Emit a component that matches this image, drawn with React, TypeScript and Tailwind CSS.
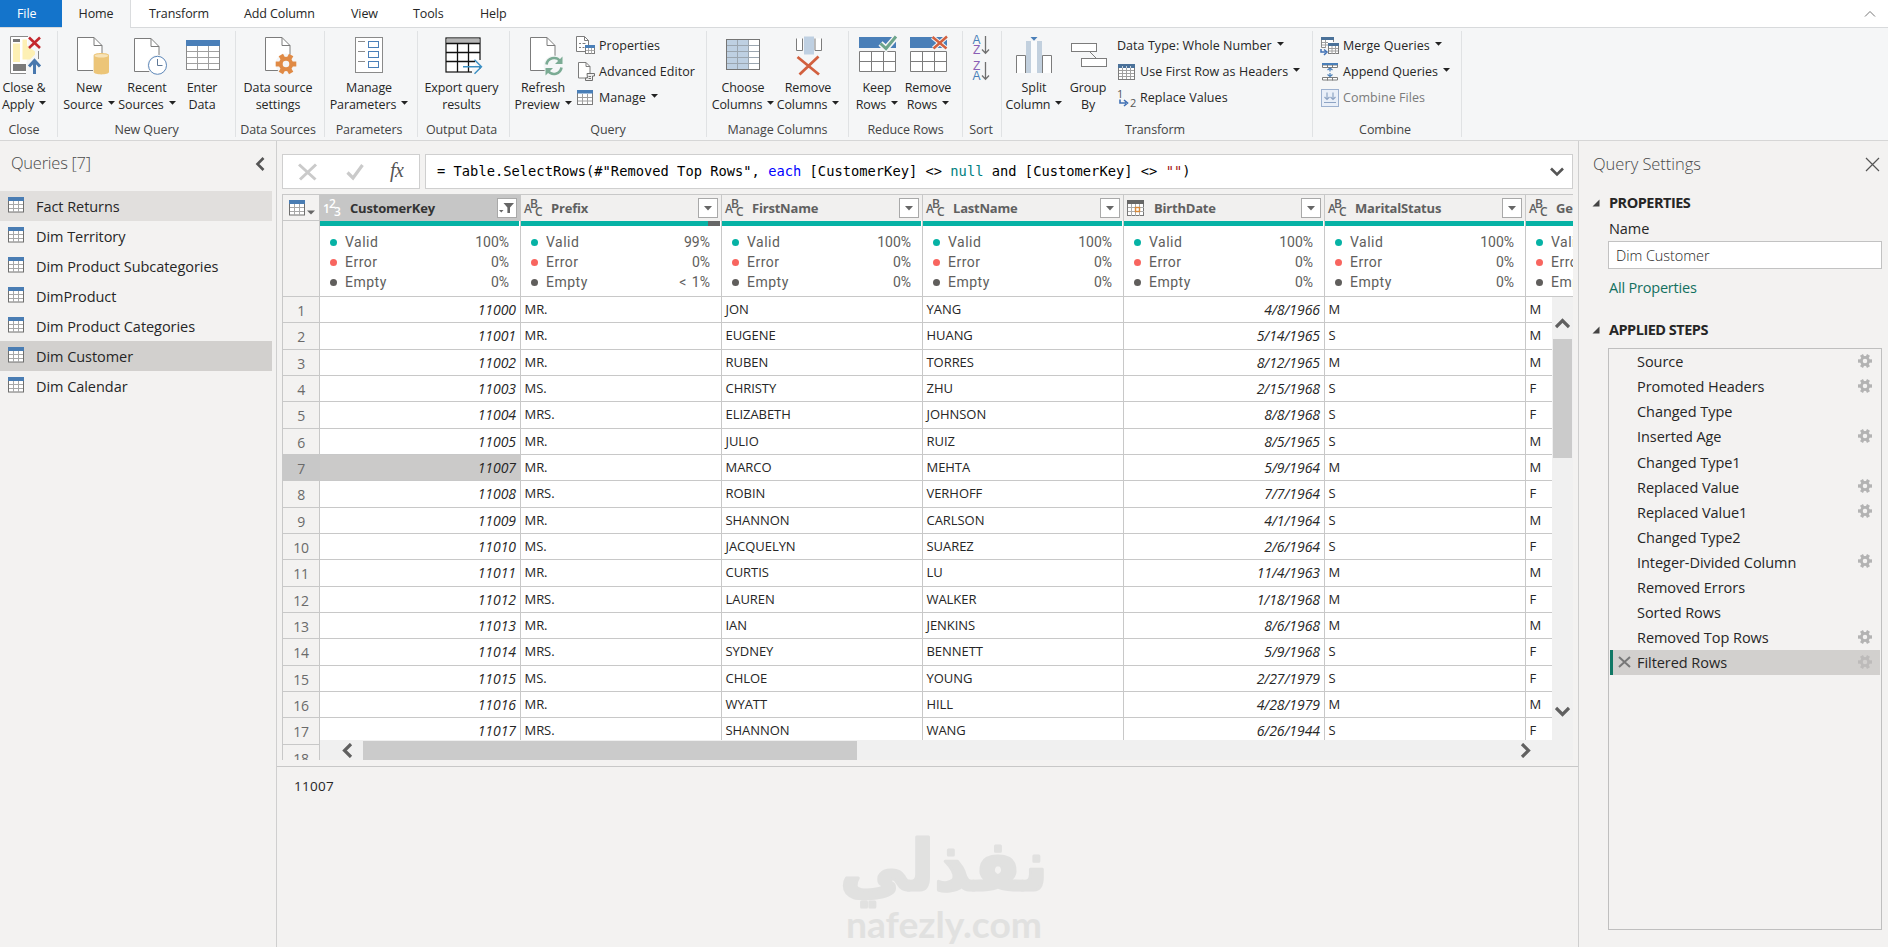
import React from 'react';

const UI = "font-['Open_Sans','Noto_Sans',sans-serif]";

/* ---------- shared glyphs ---------- */

function Caret({ className = '' }: { className?: string }) {
  return (
    <svg width="7" height="4" viewBox="0 0 7 4" className={`inline-block shrink-0 ${className}`}>
      <path d="M0 0h7L3.500 3.800z" fill="#222" />
    </svg>
  );
}

function Gear({ cx, cy, r, color, hole }: { cx: number; cy: number; r: number; color: string; hole: string }) {
  return (
    <g>
      {[0, 60, 120, 180, 240, 300].map((a) => (
        <rect key={a} x={cx + r * 0.5} y={cy - r * 0.24} width={r * 0.5} height={r * 0.48} fill={color} transform={`rotate(${a} ${cx} ${cy})`} />
      ))}
      <circle cx={cx} cy={cy} r={r * 0.7} fill={color} />
      <circle cx={cx} cy={cy} r={r * 0.32} fill={hole} />
    </g>
  );
}

function TableGlyph({ className = '' }: { className?: string }) {
  return (
    <svg width="16" height="16" viewBox="0 0 16 16" className={`shrink-0 ${className}`}>
      <rect x="0.5" y="1" width="15" height="14" fill="#fff" stroke="#6f6f6f" />
      <path d="M5.500 4v11M10.500 4v11M1 7.500h14M1 11.500h14" stroke="#a8a8a8" />
      <rect width="16" height="4" fill="#4a7db3" />
    </svg>
  );
}

function Page({ x, y, w = 24.5, h = 33, f = 8 }: { x: number; y: number; w?: number; h?: number; f?: number }) {
  return (
    <g fill="#fff" stroke="#7c7c7c" strokeWidth="1">
      <path d={`M${x} ${y}h${w - f}l${f} ${f}v${h - f}h${-w}z`} />
      <path d={`M${x + w - f} ${y}v${f}h${f}`} fill="none" />
    </g>
  );
}

/* ---------- ribbon icons, 40 x 42 ---------- */

const bigIcons: Record<string, React.ReactNode> = {
  closeApply: (
    <>
      <path d="M22 39.500H6.500v-37H24M34.500 17v8" fill="#fff" stroke="#8a8a8a" />
      <rect x="9" y="5" width="7" height="3" fill="#777" />
      <rect x="9" y="9.500" width="7" height="18.500" fill="#fdf0b4" />
      <path d="M18.500 5.500h4.500v6l8 6v3l-5 5h-7.500z" fill="#fdf0b4" />
      <rect x="9" y="30" width="13" height="7" fill="#7b7b7b" />
      <path d="M25 3.500l11 10.500M36 3.500L25 14" stroke="#c4272d" strokeWidth="2.600" />
      <path d="M30.500 40V27M25 32.500l5.500-6 5.500 6" fill="none" stroke="#4878ae" strokeWidth="3" />
    </>
  ),
  newSource: (
    <>
      <Page x={8.5} y={3.5} />
      <path d="M24 21.500h17V42H24z" fill="#f5f6f7" />
      <path d="M24.700 21.500c0-3.200 15.300-3.200 15.300 0v16.500c0 3.200-15.300 3.200-15.300 0z" fill="#ecc578" />
      <ellipse cx="32.300" cy="21.700" rx="6.800" ry="1.800" fill="#f7e3b8" />
    </>
  ),
  recent: (
    <>
      <Page x={7.5} y={4.5} />
      <circle cx="30.500" cy="31.300" r="10.500" fill="#f5f6f7" />
      <circle cx="30.500" cy="31.300" r="9" fill="#fff" stroke="#5c86b8" />
      <path d="M30.500 25v6.500h5" fill="none" stroke="#5f7896" />
    </>
  ),
  enterData: (
    <>
      <rect x="4.500" y="6.500" width="33" height="29" fill="#fff" stroke="#8a8a8a" />
      <path d="M15.500 12v23M26.500 12v23M5 17.500h32M5 23.500h32M5 29.500h32" stroke="#a0a0a0" />
      <rect x="4" y="6" width="34" height="6" fill="#4a7fb8" />
    </>
  ),
  dataSource: (
    <>
      <Page x={7.5} y={3.5} />
      <circle cx="28" cy="30" r="10.500" fill="#f5f6f7" />
      <Gear cx={28} cy={30} r={10.3} color="#e08a45" hole="#f5f6f7" />
    </>
  ),
  params: (
    <>
      <rect x="6.500" y="3.500" width="27" height="35" fill="#fff" stroke="#8a8a8a" />
      <path d="M9 7.500h7M9 17.500h7M9 27.500h7" stroke="#8a8a8a" />
      <g fill="#fff" stroke="#4a7fb8">
        <rect x="19.500" y="7.500" width="10" height="6" />
        <rect x="19.500" y="17.500" width="10" height="6" />
        <rect x="19.500" y="27.500" width="10" height="6" />
      </g>
    </>
  ),
  exportQuery: (
    <>
      <rect x="4" y="4" width="34" height="34" fill="#fff" stroke="#111" strokeWidth="1.200" />
      <rect x="4.600" y="4.600" width="32.800" height="4.400" fill="#b5b5b5" />
      <path d="M4 9.500h34M4 18.500h34M4 27.500h34M15.500 9.500V38M26.500 9.500V38" stroke="#111" strokeWidth="1.300" />
      <path d="M30 34.500h11v5.500H30zM33 26h8v6h-8z" fill="#f5f6f7" />
      <path d="M21 32.700h18.500M32.500 25.700l7 7-7 7" fill="none" stroke="#3a8fc4" strokeWidth="1.400" />
    </>
  ),
  refresh: (
    <>
      <Page x={7.5} y={3.5} />
      <circle cx="31" cy="32" r="10.500" fill="#f5f6f7" />
      <path d="M23.500 30.500a7.600 7.600 0 0 1 13.500-3.500M38.500 33.500a7.600 7.600 0 0 1-13.500 3.500" fill="none" stroke="#7bab94" strokeWidth="2.600" />
      <path d="M39.500 22.500v7.500H32zM22.500 41.500V34H30z" fill="#7bab94" />
    </>
  ),
  chooseCols: (
    <>
      <rect x="3.500" y="5.500" width="33" height="30" fill="#fff" />
      <rect x="3.500" y="5.500" width="22" height="30" fill="#bed0e2" />
      <path d="M14.500 5.500v30M25.500 5.500v30M4 11.500h33M4 17.500h33M4 23.500h33M4 29.500h33" stroke="#9ba6b0" />
      <rect x="3.500" y="5.500" width="33" height="30" fill="none" stroke="#757575" />
    </>
  ),
  removeCols: (
    <>
      <path d="M8.500 4.500v12h6v-12M27 4.500v12h6.500v-12" fill="#fff" stroke="#7c7c7c" />
      <rect x="16" y="2.500" width="10" height="18" fill="#bfd0e2" />
      <path d="M9.500 23l21.500 17.500M30.500 22.500L11.500 40.500" stroke="#d2603f" strokeWidth="2.800" />
    </>
  ),
  keepRows: (
    <>
      <rect x="2" y="3" width="37" height="11" fill="#4a7fb8" />
      <path d="M2.500 17.500h36v20h-36zM14.500 17.500v20M26.500 17.500v20M2.500 27.500h36" fill="#fff" stroke="#7c7c7c" />
      <path d="M23.500 9.500l5.500 5L39 3" fill="none" stroke="#f5f6f7" strokeWidth="6" />
      <path d="M23.500 9.500l5.500 5L39 2.500" fill="none" stroke="#6da58b" strokeWidth="3" />
    </>
  ),
  removeRows: (
    <>
      <rect x="2" y="3" width="37" height="11" fill="#4a7fb8" />
      <path d="M2.500 17.500h36v20h-36zM14.500 17.500v20M26.500 17.500v20M2.500 27.500h36" fill="#fff" stroke="#7c7c7c" />
      <path d="M24.500 3l14 11.500M39 2.500L25.500 14.500" stroke="#f5f6f7" strokeWidth="4.500" />
      <path d="M24.500 3l14 11.500M39 2.500L25.500 14.500" stroke="#d2603f" strokeWidth="2.400" />
    </>
  ),
  split: (
    <>
      <path d="M2.500 39V21.500h9V39M28.500 39V21.500h9V39" fill="#fff" stroke="#7c7c7c" />
      <rect x="12" y="7" width="5" height="32" fill="#c2d0de" />
      <rect x="17" y="7" width="6" height="32" fill="#fafbfc" />
      <rect x="23" y="7" width="5" height="32" fill="#c2d0de" />
      <path d="M16.500 3h7L20 6.800z" fill="#4a7fb8" />
    </>
  ),
  group: (
    <g fill="#fff" stroke="#7c7c7c">
      <path d="M21.500 17.500l7 7" />
      <rect x="3.500" y="9.500" width="25" height="8" />
      <rect x="13.500" y="24.500" width="25" height="8" />
    </g>
  ),
};

const smallIcons: Record<string, React.ReactNode> = {
  properties: (
    <>
      <Page x={0.5} y={0.5} w={12} h={15} f={4} />
      <path d="M3 7.500h2M6.500 7.500h3M3 11.500h2M6.500 11.500h2" stroke="#7c7c7c" />
      <rect x="9.500" y="9.500" width="9" height="8" fill="#fff" stroke="#7c7c7c" />
      <path d="M12.500 12v6M15.500 12v6M10 14.500h9" stroke="#999" strokeWidth="0.800" />
      <rect x="9" y="9" width="10" height="3" fill="#4a7fb8" />
    </>
  ),
  advanced: (
    <>
      <Page x={2.5} y={0.5} w={11.5} h={15.5} f={4} />
      <path d="M11 11.500h7.500v2.500h-2v4.500h-7V16h2z" fill="#eee" stroke="#707070" />
      <path d="M12.500 14.500h2.500M12.500 16.500h2.500" stroke="#707070" />
    </>
  ),
  table: (
    <>
      <rect x="1.500" y="2.500" width="15" height="14" fill="#fff" stroke="#7c7c7c" />
      <path d="M6.500 6v10M11.500 6v10M2 9.500h14M2 13h14" stroke="#a0a0a0" />
      <rect x="1" y="2" width="16" height="3.500" fill="#4a7fb8" />
    </>
  ),
  headers: (
    <>
      <rect x="1.500" y="2.500" width="16" height="15" fill="#fff" stroke="#7c7c7c" />
      <path d="M5.500 5v12M9.500 5v12M13.500 5v12M2 8.500h15M2 11.500h15M2 14.500h15" stroke="#a0a0a0" />
      <rect x="1" y="2" width="17" height="4" fill="#4a7199" />
      <path d="M5.500 4v2M9.500 4v2M13.500 4v2" stroke="#fff" strokeWidth="0.700" />
    </>
  ),
  merge: (
    <>
      <path d="M6 11.500H1.500v-10h12V6" fill="#fff" stroke="#8a8a8a" />
      <path d="M5.500 4v8M2 6.500h6M2 9h6" stroke="#a0a0a0" />
      <rect x="1" y="1" width="13" height="3" fill="#4a7199" />
      <rect x="8.500" y="7.500" width="10" height="10" fill="#fff" stroke="#7c7c7c" />
      <path d="M12 10v8M15.500 10v8M9 12.500h9M9 15h9" stroke="#a0a0a0" />
      <rect x="8" y="7" width="11" height="3" fill="#4a7199" />
      <path d="M1 13v3h4.500M4 13.500l3 2.500-3 3" fill="none" stroke="#3f70b5" strokeWidth="1.500" />
    </>
  ),
  append: (
    <>
      <path d="M2.500 3h15v2.500h-15zM7.500 3v3M12.500 3v3M2.500 15.500h15v2.500h-15zM7.500 15.500v3M12.500 15.500v3" fill="#fff" stroke="#7c7c7c" />
      <rect x="2" y="1" width="16" height="2" fill="#4a7fb8" />
      <path d="M10 6v3.500M7.500 8L10 6l2.500 2M10 11v3.500M7.500 12.500L10 14.500l2.500-2" fill="none" stroke="#4a7fb8" strokeWidth="1.200" />
    </>
  ),
  combine: (
    <>
      <rect x="1.500" y="1.500" width="17" height="17" fill="#e9eff8" stroke="#9db1cf" />
      <path d="M7 4.500v7M4.500 9L7 11.500 9.500 9M13 4.500v7M10.500 9l2.500 2.500L15.500 9M4 14.500h12" fill="none" stroke="#8ea4c4" strokeWidth="1.200" />
    </>
  ),
};

function Big({ icon, lines, caret, className }: { icon: string; lines: [string, string]; caret?: boolean; className: string }) {
  return (
    <div className={`flex shrink-0 flex-col items-center pt-1.5 ${className}`}>
      <svg width="40" height="42" viewBox="0 0 40 42" className="mb-[3px] shrink-0 overflow-visible">
        {bigIcons[icon]}
      </svg>
      <span className="whitespace-nowrap leading-[17px]">{lines[0]}</span>
      <span className="flex items-center gap-[5px] whitespace-nowrap leading-[17px]">
        {lines[1]}
        {caret && <Caret className="-mt-[4px]" />}
      </span>
    </div>
  );
}

function Small({ icon, label, caret, muted }: { icon?: string; label: string; caret?: boolean; muted?: boolean }) {
  return (
    <div className={`flex h-[26px] items-center tracking-[0.050px] ${muted ? 'text-[#7b7b7b]' : ''}`}>
      {icon && (
        <svg width="20" height="20" viewBox="0 0 20 20" className="mr-[3px] shrink-0">
          {smallIcons[icon]}
        </svg>
      )}
      <span className="whitespace-nowrap">{label}</span>
      {caret && <Caret className="ml-[5px] -mt-[4px]" />}
    </div>
  );
}

function Group({ label, className, children }: { label: string; className: string; children: React.ReactNode }) {
  return (
    <div className={`flex shrink-0 flex-col ${className}`}>
      <div className="flex h-[92px]">{children}</div>
      <div className="text-center leading-5 whitespace-nowrap text-[#444]">{label}</div>
    </div>
  );
}

const Rule = () => <div className="mt-[3px] h-[106px] w-px shrink-0 bg-[#e0e2e4]" />;

function SortIcon({ flip }: { flip?: boolean }) {
  return (
    <div className="flex h-[26px] items-center">
      <div className="flex w-[9px] flex-col items-center font-['Liberation_Sans',sans-serif] text-[12px] leading-[10px]">
        <span className={flip ? 'text-[#8a5fb5]' : 'text-[#4a7fb8]'}>{flip ? 'Z' : 'A'}</span>
        <span className={flip ? 'text-[#4a7fb8]' : 'text-[#8a5fb5]'}>{flip ? 'A' : 'Z'}</span>
      </div>
      <svg width="9" height="20" viewBox="0 0 9 20">
        <path d="M4.500 1v17M1 14.500l3.500 3.700L8 14.500" fill="none" stroke="#707070" strokeWidth="1.300" />
      </svg>
    </div>
  );
}

function Ribbon() {
  return (
    <header className="text-[12.500px] tracking-[-0.1px] text-[#262626]">
      <nav className="flex h-7 border-b border-[#d8dadc] bg-white pr-3 leading-[27px]">
        <div className="w-[62px] bg-[#1474cb] pl-[17px] text-white">File</div>
        <div className="-mb-px h-7 w-[69px] border-r border-[#dadcde] bg-[#f5f6f7] text-center">Home</div>
        <div className="w-[113px] pl-[18px]">Transform</div>
        <div className="w-[107px]">Add Column</div>
        <div className="w-[62px]">View</div>
        <div className="w-[67px]">Tools</div>
        <div>Help</div>
        <svg width="12" height="8" viewBox="0 0 12 8" className="mt-2.5 ml-auto">
          <path d="M1 6.500L6 1.500l5 5" fill="none" stroke="#777" />
        </svg>
      </nav>
      <div className="flex h-[113px] border-b border-[#d6d6d6] bg-[#f5f6f7]">
        <Group label="Close" className="w-[57px] pr-[9px]">
          <Big icon="closeApply" lines={['Close &', 'Apply']} caret className="w-12" />
        </Group>
        <Rule />
        <Group label="New Query" className="w-[177px]">
          <Big icon="newSource" lines={['New', 'Source']} caret className="w-[62px]" />
          <Big icon="recent" lines={['Recent', 'Sources']} caret className="w-[54px]" />
          <Big icon="enterData" lines={['Enter', 'Data']} className="w-14" />
        </Group>
        <Rule />
        <Group label="Data Sources" className="w-[88px] pr-1">
          <Big icon="dataSource" lines={['Data source', 'settings']} className="w-[84px]" />
        </Group>
        <Rule />
        <Group label="Parameters" className="w-[92px] pr-1">
          <Big icon="params" lines={['Manage', 'Parameters']} caret className="w-[88px]" />
        </Group>
        <Rule />
        <Group label="Output Data" className="w-[91px] pr-1">
          <Big icon="exportQuery" lines={['Export query', 'results']} className="w-[87px]" />
        </Group>
        <Rule />
        <Group label="Query" className="w-[196px]">
          <Big icon="refresh" lines={['Refresh', 'Preview']} caret className="w-[66px]" />
          <div className="pt-[5px]">
            <Small icon="properties" label="Properties" />
            <Small icon="advanced" label="Advanced Editor" />
            <Small icon="table" label="Manage" caret />
          </div>
        </Group>
        <Rule />
        <Group label="Manage Columns" className="w-[141px]">
          <Big icon="chooseCols" lines={['Choose', 'Columns']} caret className="w-[72px]" />
          <Big icon="removeCols" lines={['Remove', 'Columns']} caret className="w-[58px]" />
        </Group>
        <Rule />
        <Group label="Reduce Rows" className="w-[113px]">
          <Big icon="keepRows" lines={['Keep', 'Rows']} caret className="w-14" />
          <Big icon="removeRows" lines={['Remove', 'Rows']} caret className="w-[46px]" />
        </Group>
        <Rule />
        <Group label="Sort" className="w-[38px] pr-0.5">
          <div className="pt-1 pl-[9px]">
            <SortIcon />
            <SortIcon flip />
          </div>
        </Group>
        <Rule />
        <Group label="Transform" className="w-[310px] pr-1">
          <Big icon="split" lines={['Split', 'Column']} caret className="w-16" />
          <Big icon="group" lines={['Group', 'By']} className="w-11" />
          <div className="pt-[5px] pl-[7px]">
            <Small label="Data Type: Whole Number" caret />
            <Small icon="headers" label="Use First Row as Headers" caret />
            <div className="flex h-[26px] items-center tracking-[0.050px]">
              <div className="relative mr-[3px] h-5 w-5 text-[11px] leading-3 text-[#555]">
                <span className="absolute top-0 left-0">1</span>
                <span className="absolute -bottom-px left-[13px]">2</span>
                <svg width="10" height="8" viewBox="0 0 10 8" className="absolute top-[11px] left-[2px]">
                  <path d="M1 0.500v3.500h6M5 1l3.500 3L5 7" fill="none" stroke="#3f70b5" strokeWidth="1.600" />
                </svg>
              </div>
              <span>Replace Values</span>
            </div>
          </div>
        </Group>
        <Rule />
        <Group label="Combine" className="w-[148px] pr-1">
          <div className="pt-[5px] pl-[7px]">
            <Small icon="merge" label="Merge Queries" caret />
            <Small icon="append" label="Append Queries" caret />
            <Small icon="combine" label="Combine Files" muted />
          </div>
        </Group>
        <Rule />
      </div>
    </header>
  );
}

/* ---------- queries pane ---------- */

const queries = ['Fact Returns', 'Dim Territory', 'Dim Product Subcategories', 'DimProduct', 'Dim Product Categories', 'Dim Customer', 'Dim Calendar'];

function QueriesPane() {
  return (
    <aside className="w-[277px] shrink-0 border-r border-[#cfcfcf]">
      <div className="flex h-[50px] items-center justify-between pr-[11px] pb-[5px] pl-[11px]">
        <h2 className="text-[16.500px] font-light tracking-[-0.250px] text-[#4a4a4a]">Queries [7]</h2>
        <svg width="10" height="14" viewBox="0 0 10 14">
          <path d="M8.500 1L2.500 7l6 6" fill="none" stroke="#555" strokeWidth="2.600" />
        </svg>
      </div>
      <ul className="w-[272px]">
        {queries.map((q, i) => (
          <li
            key={q}
            className={`flex h-[30px] items-center pl-2 text-[14.500px] tracking-[-0.050px] text-[#262626] ${i === 0 ? 'bg-[#e1dfdd]' : i === 5 ? 'bg-[#d2d0ce]' : ''}`}
          >
            <TableGlyph className="mr-3 -mt-0.5" />
            <span className="pt-px">{q}</span>
          </li>
        ))}
      </ul>
    </aside>
  );
}

/* ---------- data grid ---------- */

type Column = { name: string; kind: 'num' | 'text' | 'date'; valid?: string; empty?: string; selected?: boolean };

const columns: Column[] = [
  { name: 'CustomerKey', kind: 'num', selected: true },
  { name: 'Prefix', kind: 'text', valid: '99%', empty: '< 1%' },
  { name: 'FirstName', kind: 'text' },
  { name: 'LastName', kind: 'text' },
  { name: 'BirthDate', kind: 'date' },
  { name: 'MaritalStatus', kind: 'text' },
  { name: 'Gender', kind: 'text' },
];

const rows: string[][] = [
  ['11000', 'MR.', 'JON', 'YANG', '4/8/1966', 'M', 'M'],
  ['11001', 'MR.', 'EUGENE', 'HUANG', '5/14/1965', 'S', 'M'],
  ['11002', 'MR.', 'RUBEN', 'TORRES', '8/12/1965', 'M', 'M'],
  ['11003', 'MS.', 'CHRISTY', 'ZHU', '2/15/1968', 'S', 'F'],
  ['11004', 'MRS.', 'ELIZABETH', 'JOHNSON', '8/8/1968', 'S', 'F'],
  ['11005', 'MR.', 'JULIO', 'RUIZ', '8/5/1965', 'S', 'M'],
  ['11007', 'MR.', 'MARCO', 'MEHTA', '5/9/1964', 'M', 'M'],
  ['11008', 'MRS.', 'ROBIN', 'VERHOFF', '7/7/1964', 'S', 'F'],
  ['11009', 'MR.', 'SHANNON', 'CARLSON', '4/1/1964', 'S', 'M'],
  ['11010', 'MS.', 'JACQUELYN', 'SUAREZ', '2/6/1964', 'S', 'F'],
  ['11011', 'MR.', 'CURTIS', 'LU', '11/4/1963', 'M', 'M'],
  ['11012', 'MRS.', 'LAUREN', 'WALKER', '1/18/1968', 'M', 'F'],
  ['11013', 'MR.', 'IAN', 'JENKINS', '8/6/1968', 'M', 'M'],
  ['11014', 'MRS.', 'SYDNEY', 'BENNETT', '5/9/1968', 'S', 'F'],
  ['11015', 'MS.', 'CHLOE', 'YOUNG', '2/27/1979', 'S', 'F'],
  ['11016', 'MR.', 'WYATT', 'HILL', '4/28/1979', 'M', 'M'],
  ['11017', 'MRS.', 'SHANNON', 'WANG', '6/26/1944', 'S', 'F'],
];

function TypeIcon({ kind }: { kind: Column['kind'] }) {
  if (kind === 'date') {
    return (
      <svg width="18" height="17" viewBox="0 0 18 17" className="mr-[9px] ml-[3px] shrink-0">
        <rect x="0.500" y="0.500" width="16" height="15" fill="#fff" stroke="#777" />
        <path d="M4.500 4v12M8.500 4v12M12.500 4v12M1 7.500h16M1 11.500h16" stroke="#aaa" />
        <rect width="17" height="4" fill="#666" />
        <rect x="8.500" y="7.500" width="4" height="4" fill="#fff" stroke="#d98a3a" strokeWidth="1.400" />
      </svg>
    );
  }
  const glyphs = kind === 'num' ? ['1', '2', '3'] : ['A', 'B', 'C'];
  return (
    <div className={`relative h-5 w-[30px] shrink-0 text-[12px] leading-3 font-semibold ${kind === 'num' ? 'text-white' : 'text-[#606060]'}`}>
      <span className="absolute top-[5px] left-[3px]">{glyphs[0]}</span>
      <span className="absolute top-0 left-[9px]">{glyphs[1]}</span>
      <span className="absolute top-[8px] left-[14px]">{glyphs[2]}</span>
    </div>
  );
}

function Stat({ dot, label, value }: { dot: string; label: string; value: string }) {
  return (
    <div className="flex h-5 items-center">
      <span className={`mr-2 h-[7px] w-[7px] rounded-full ${dot}`} />
      <span className="flex-1 tracking-[0.500px]">{label}</span>
      <span className="[word-spacing:2px]">{value}</span>
    </div>
  );
}

function DataGrid() {
  return (
    <div className="flex h-[578px] shrink-0 border-b border-[#c8c8c8] pt-[5px] pb-[6px] pl-[5px]">
      <div className="w-[38px] shrink-0 overflow-hidden border-x border-t border-[#c8c8c8]">
        <div className="flex h-[26px] items-center border-b border-[#c8c8c8] pl-1.5">
          <TableGlyph />
          <svg width="8" height="5" viewBox="0 0 8 5" className="mt-2.5 ml-[2px]">
            <path d="M0 0.500h8L4 4.500z" fill="#666" />
          </svg>
        </div>
        <div className="h-[76px] border-b border-[#c8c8c8]" />
        {Array.from({ length: 18 }, (_, i) => (
          <div
            key={i}
            className={`flex h-[26.330px] items-center justify-center border-b border-[#c8c8c8] pt-0.5 text-[14px] tracking-[-0.300px] text-[#6a6a6a] ${i === 6 ? 'bg-[#c8c8c8]' : ''}`}
          >
            {i + 1}
          </div>
        ))}
      </div>
      <div className="flex w-[1253px] flex-col overflow-hidden">
        <div className="flex h-[103px] shrink-0 overflow-hidden border-t border-[#c8c8c8]">
          {columns.map((c) => (
            <div key={c.name} className="flex w-[201px] shrink-0 flex-col border-r border-b border-[#c8c8c8] bg-white">
              <div className={`flex h-[26px] items-center pr-[3px] ${c.selected ? 'bg-[#c6c6c6]' : 'bg-[#f1f0ef]'}`}>
                <TypeIcon kind={c.kind} />
                <span className={`flex-1 pt-px text-[13px] font-bold tracking-[-0.200px] ${c.selected ? 'text-[#333]' : 'text-[#606060]'}`}>{c.name}</span>
                <svg width="20" height="20" viewBox="0 0 20 20">
                  <rect x="0.500" y="0.500" width="19" height="19" fill="#fff" stroke="#a9a9a9" />
                  {c.selected ? (
                    <path d="M6.500 5H17l-4 4.500V15h-2.600V9.500zM2 12h4.500l-2.200 2.500z" fill="#666" />
                  ) : (
                    <path d="M6 8h8l-4 4.500z" fill="#666" />
                  )}
                </svg>
              </div>
              <div className="mr-px flex h-[5px] bg-[#06b2a5]">{c.name === 'Prefix' && <div className="ml-auto w-3 bg-[#666]" />}</div>
              <div className="pt-1.5 pr-[11px] pl-2.5 font-['Roboto',sans-serif] text-[14px] text-[#605e5c]">
                <Stat dot="bg-[#06b2a5]" label="Valid" value={c.valid ?? '100%'} />
                <Stat dot="bg-[#f8655f]" label="Error" value="0%" />
                <Stat dot="bg-[#605e5c]" label="Empty" value={c.empty ?? '0%'} />
              </div>
            </div>
          ))}
        </div>
        <div className="flex min-h-0 flex-1">
          <div className="flex w-[1232px] flex-col">
            <div className="h-[443px] shrink-0 overflow-hidden bg-white text-[13px] leading-[25px] tracking-[-0.050px] text-[#262626]">
              {rows.map((r, i) => (
                <div key={r[0]} className="flex h-[26.330px]">
                  {r.map((v, j) => (
                    <div
                      key={j}
                      className={`w-[201px] shrink-0 border-r border-b border-[#c8c8c8] ${j === 0 || j === 4 ? 'pr-[4px] text-right text-[14px] italic' : 'pl-[3.500px]'} ${i === 6 && j === 0 ? 'bg-[#cbcac9]' : ''}`}
                    >
                      {v}
                    </div>
                  ))}
                </div>
              ))}
            </div>
            <div className="flex flex-1 items-center bg-[#f0f0f0] pt-px pr-5 pl-[21px]">
              <svg width="12" height="15" viewBox="0 0 12 15" className="mr-2.5">
                <path d="M10 1L3.500 7.500l6.500 6.500" fill="none" stroke="#606060" strokeWidth="3.200" />
              </svg>
              <div className="h-[19px] w-[494px] bg-[#cbcbcb]" />
              <svg width="12" height="15" viewBox="0 0 12 15" className="ml-auto">
                <path d="M2 1l6.500 6.500L2 14" fill="none" stroke="#606060" strokeWidth="3.200" />
              </svg>
            </div>
          </div>
          <div className="flex flex-1 flex-col items-center bg-[#f0f0f0] pt-5 pr-px">
            <svg width="15" height="12" viewBox="0 0 15 12" className="mb-2.5 shrink-0">
              <path d="M1 10l6.500-6.500L14 10" fill="none" stroke="#606060" strokeWidth="3.200" />
            </svg>
            <div className="h-[119px] w-[19px] bg-[#cbcbcb]" />
            <svg width="15" height="12" viewBox="0 0 15 12" className="mt-auto mb-[42px] shrink-0">
              <path d="M1 2l6.500 6.500L14 2" fill="none" stroke="#606060" strokeWidth="3.200" />
            </svg>
          </div>
        </div>
      </div>
    </div>
  );
}

function FormulaBar() {
  return (
    <div className="flex h-[48px] shrink-0 gap-[5px] pt-[13px] pl-[5px]">
      <div className="flex h-[35px] w-[138px] items-center border border-[#cfcfcf] bg-white pl-[15px]">
        <svg width="20" height="18" viewBox="0 0 20 18">
          <path d="M1 1.500l16.500 15M18 1.500L2 16.500" stroke="#cacaca" strokeWidth="3" />
        </svg>
        <svg width="18" height="18" viewBox="0 0 18 18" className="ml-[28px]">
          <path d="M1.500 9.500L7 15 16.500 2" fill="none" stroke="#cacaca" strokeWidth="3.200" />
        </svg>
        <span className="ml-[26px] -mt-1 font-['Liberation_Serif',serif] text-[20px] tracking-[-0.500px] text-[#555] italic">fx</span>
      </div>
      <div className="flex h-[35px] w-[1148px] items-center border border-[#cfcfcf] bg-white pr-2 pl-[11px]">
        <code className="font-['DejaVu_Sans_Mono',monospace] text-[13.720px] tracking-[0.020px] whitespace-pre text-black">
          {'= Table.SelectRows(#"Removed Top Rows", '}
          <span className="text-[#0000ff]">each</span>
          {' [CustomerKey] <> '}
          <span className="text-[#008080]">null</span>
          {' and [CustomerKey] <> '}
          <span className="text-[#a31515]">""</span>)
        </code>
        <svg width="14" height="10" viewBox="0 0 14 10" className="ml-auto">
          <path d="M1 1.500l6 6 6-6" fill="none" stroke="#555" strokeWidth="2.600" />
        </svg>
      </div>
    </div>
  );
}

function Preview() {
  return (
    <div className="flex flex-1 flex-col overflow-hidden pt-[9px]">
      <span className="pl-[17px] text-[13.500px] leading-5 tracking-[0.300px] text-[#262626]">11007</span>
      <svg width="214" height="122" viewBox="0 0 214 122" className="mt-[29px] ml-[560px] shrink-0" fill="#e1e1e0">
        <text
          x="3"
          y="65"
          textLength="208"
          lengthAdjust="spacingAndGlyphs"
          direction="rtl"
          textAnchor="end"
          stroke="#e1e1e0"
          strokeWidth="3"
          strokeLinejoin="round"
          className="font-['DejaVu_Sans',sans-serif] text-[70px] font-bold"
        >
          نفذلي
        </text>
        <text x="9" y="113" textLength="196" lengthAdjust="spacingAndGlyphs" className="font-['Lato',sans-serif] text-[36px] font-bold">
          nafezly.com
        </text>
      </svg>
    </div>
  );
}

/* ---------- query settings ---------- */

const steps: [string, boolean][] = [
  ['Source', true],
  ['Promoted Headers', true],
  ['Changed Type', false],
  ['Inserted Age', true],
  ['Changed Type1', false],
  ['Replaced Value', true],
  ['Replaced Value1', true],
  ['Changed Type2', false],
  ['Integer-Divided Column', true],
  ['Removed Errors', false],
  ['Sorted Rows', false],
  ['Removed Top Rows', true],
  ['Filtered Rows', true],
];

function SectionTitle({ children }: { children: React.ReactNode }) {
  return (
    <h3 className="flex h-5 items-center text-[14.500px] font-bold tracking-[-0.500px] text-[#262626]">
      <svg width="8" height="8" viewBox="0 0 8 8" className="mr-[9px] -mt-px">
        <path d="M7.500 0.500v7h-7z" fill="#444" />
      </svg>
      {children}
    </h3>
  );
}

function SettingsPane() {
  return (
    <aside className="flex flex-1 flex-col pr-1.5 pl-[13px] text-[14.500px] tracking-[-0.050px] text-[#262626]">
      <div className="flex h-[46px] items-center justify-between pl-px">
        <h2 className="text-[16.500px] font-light tracking-[-0.050px] text-[#4a4a4a]">Query Settings</h2>
        <svg width="15" height="15" viewBox="0 0 15 15" className="mr-0.5">
          <path d="M1 1l13 13M14 1L1 14" stroke="#555" strokeWidth="1.200" />
        </svg>
      </div>
      <div className="mt-[6px]">
        <SectionTitle>PROPERTIES</SectionTitle>
      </div>
      <div className="flex flex-1 flex-col pl-4">
        <label className="mt-[6px] ml-px leading-5">Name</label>
        <div className="mt-[2px] h-7 border border-[#c2c2c2] bg-white pl-[7px] leading-[28px] font-light">Dim Customer</div>
        <a className="mt-[9px] ml-px leading-5 tracking-[-0.200px] text-[#12705f]">All Properties</a>
        <div className="mt-[22px] -ml-4">
          <SectionTitle>APPLIED STEPS</SectionTitle>
        </div>
        <ul className="mt-[8px] mb-[17px] flex-1 border border-[#bfbfbf] px-px">
          {steps.map(([name, gear], i) => (
            <li
              key={name}
              className={`flex h-[25.100px] items-center border-l-[3px] pr-[8px] ${i === 12 ? 'border-[#117865] bg-[#d2d0ce]' : 'border-transparent'}`}
            >
              <span className="flex w-6 items-center pl-[5px]">
                {i === 12 && (
                  <svg width="13" height="12" viewBox="0 0 13 12" className="-mt-0.5">
                    <path d="M1 1l11 10M12 1L1 11" stroke="#777" strokeWidth="2" />
                  </svg>
                )}
              </span>
              <span className="flex-1 pt-px">{name}</span>
              {gear && (
                <svg width="14" height="14" viewBox="0 0 14 14" className="-mt-0.5">
                  <Gear cx={7} cy={7} r={7} color={i === 12 ? '#bdbbba' : '#b3b3b3'} hole={i === 12 ? '#d2d0ce' : '#f3f2f1'} />
                </svg>
              )}
            </li>
          ))}
        </ul>
      </div>
    </aside>
  );
}

export default function App() {
  return (
    <div className={`flex h-[947px] w-[1888px] flex-col overflow-hidden bg-[#f3f2f1] ${UI}`}>
      <Ribbon />
      <div className="flex min-h-0 flex-1">
        <QueriesPane />
        <main className="flex w-[1302px] shrink-0 flex-col border-r border-[#cfcfcf]">
          <FormulaBar />
          <DataGrid />
          <Preview />
        </main>
        <SettingsPane />
      </div>
    </div>
  );
}
